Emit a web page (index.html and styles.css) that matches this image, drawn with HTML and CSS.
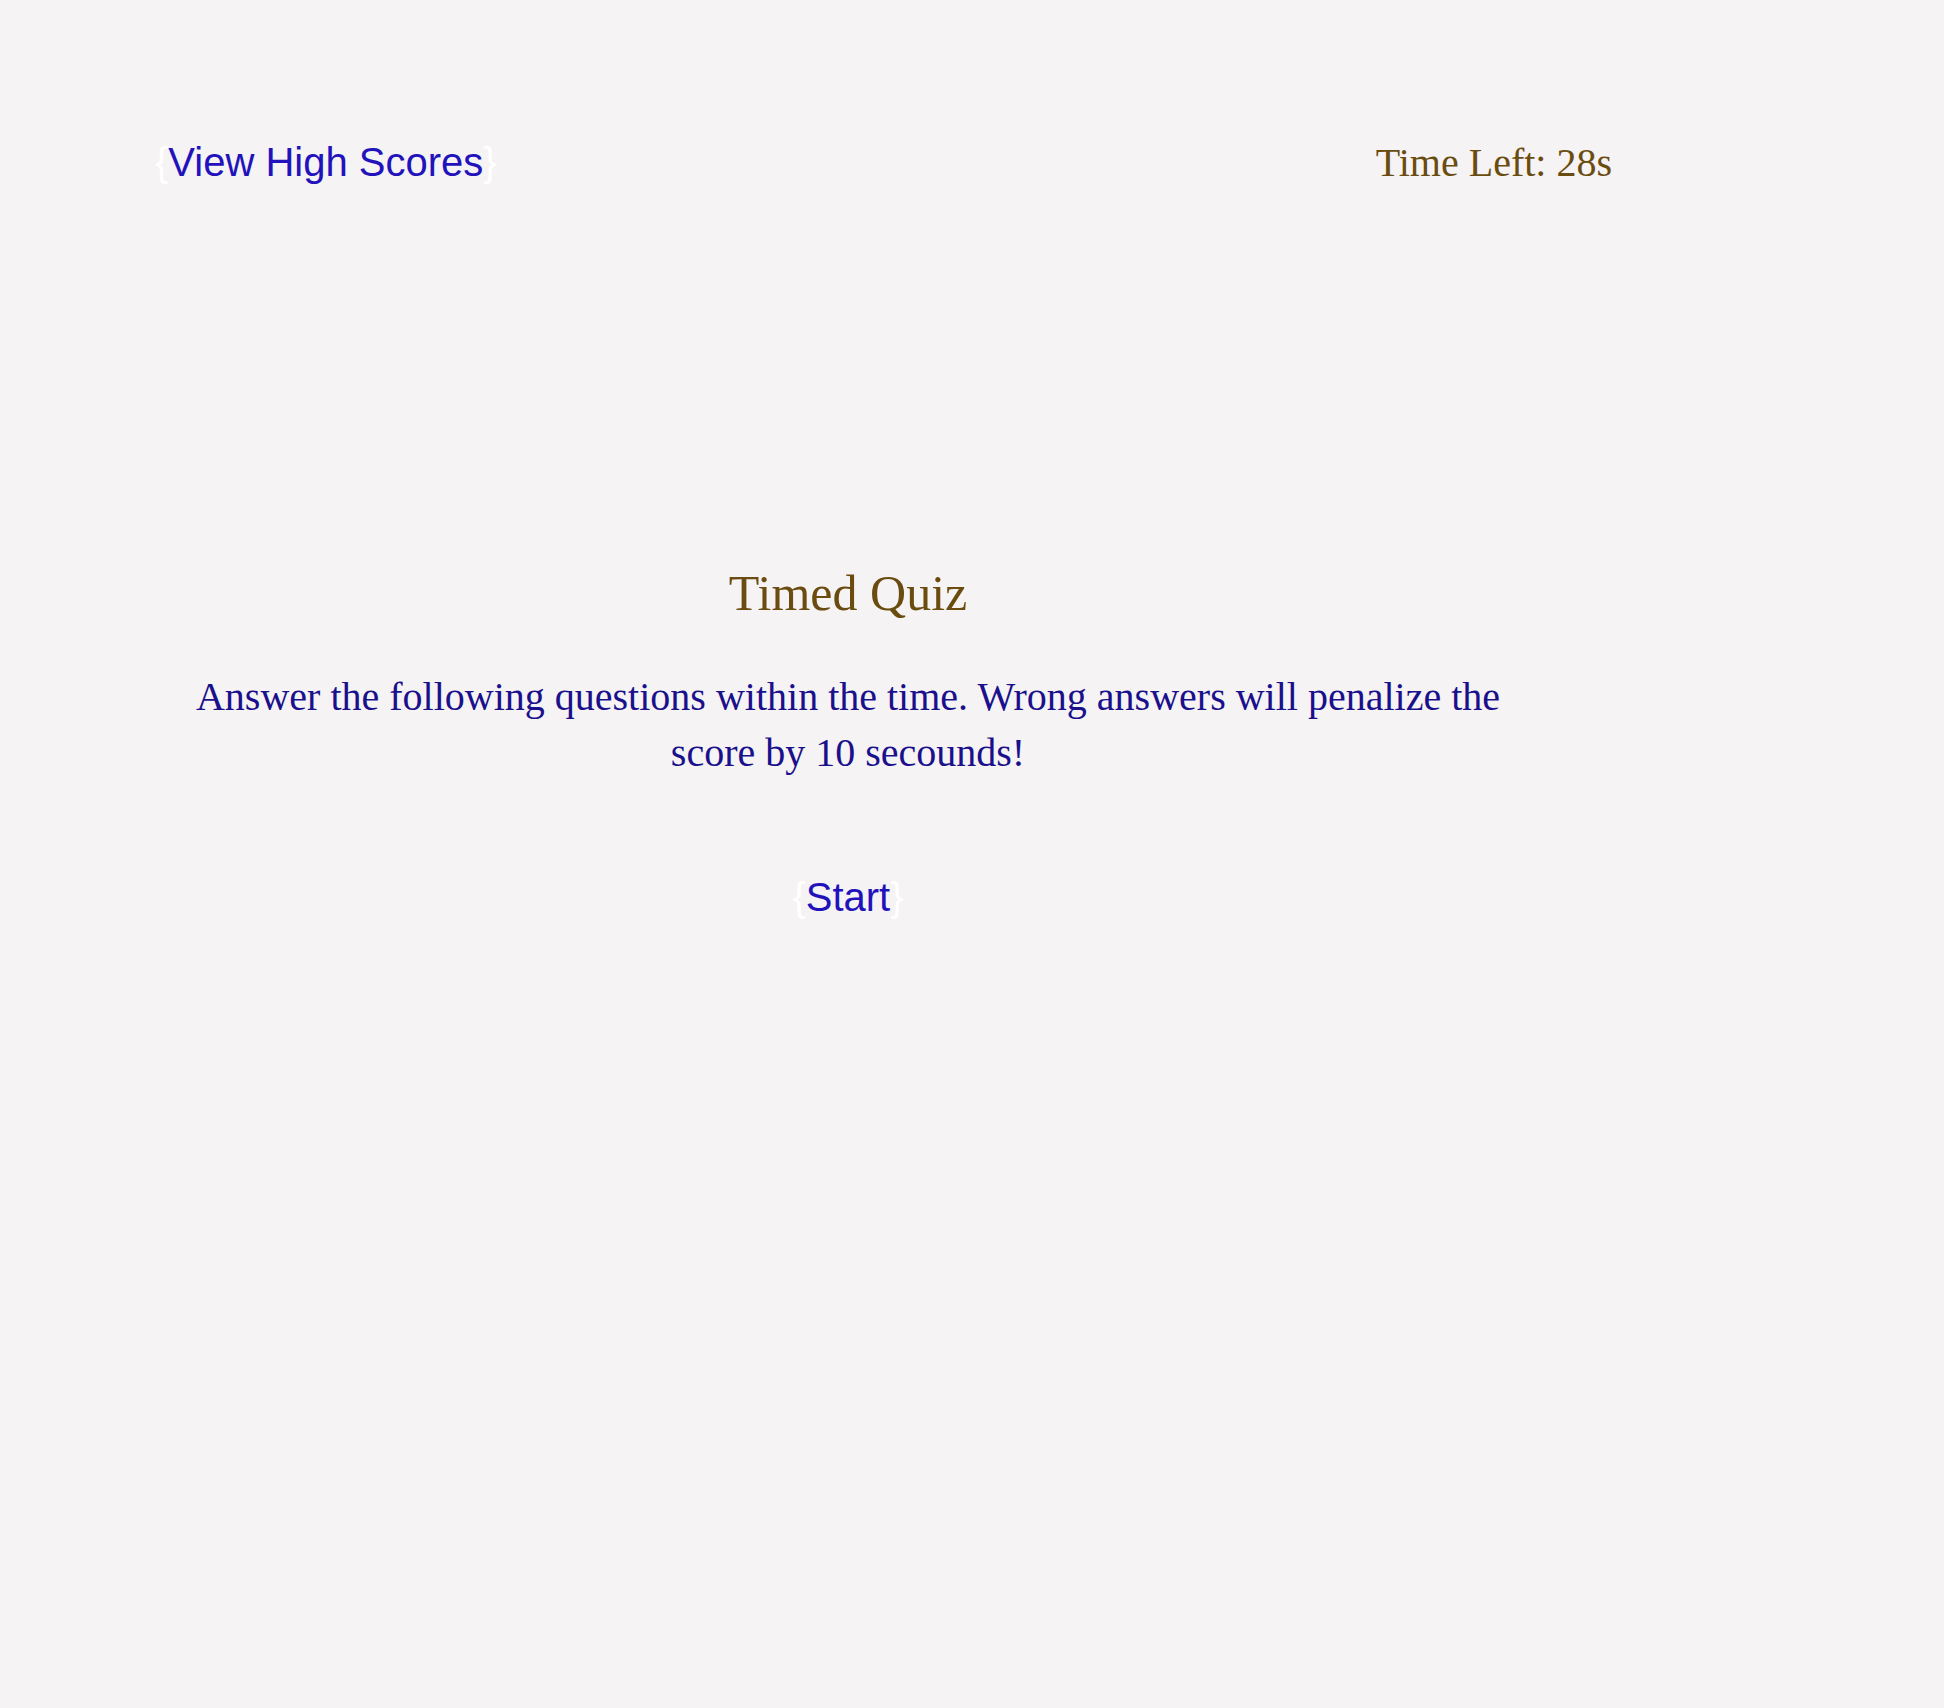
FILE: index.html
```html
<!DOCTYPE html>
<html lang="en">
<head>
<meta charset="utf-8">
<title>Timed Quiz</title>
<link rel="stylesheet" href="styles.css">
</head>
<body>
<div class="page">
  <header class="topbar">
    <button class="link-btn">View High Scores</button>
    <div class="timer">Time Left: 28s</div>
  </header>
  <main class="intro">
    <h1 class="title">Timed Quiz</h1>
    <p class="desc">Answer the following questions within the time. Wrong answers will penalize the score by 10 secounds!</p>
    <button class="link-btn start">Start</button>
  </main>
</div>
</body>
</html>
```
FILE: styles.css
```css
html, body {
  margin: 0;
  padding: 0;
  background: #f5f3f4;
}
.page {
  margin-left: 155px;
  width: 1457px;
  padding-top: 139px;
}
.topbar {
  display: flex;
  justify-content: space-between;
  align-items: baseline;
}
.link-btn {
  background: none;
  border: none;
  padding: 0;
  margin: 0;
  font-family: "Liberation Sans", Arial, sans-serif;
  font-size: 40px;
  line-height: normal;
  color: #2212bb;
  cursor: pointer;
}
.link-btn::before {
  content: "{";
  color: #ffffff;
}
.link-btn::after {
  content: "}";
  color: #ffffff;
}
.timer {
  font-family: "Liberation Serif", "Times New Roman", serif;
  font-size: 40px;
  color: #6b4c10;
}
.intro {
  width: 1386px;
  text-align: center;
  padding-top: 378px;
}
.title {
  margin: 0;
  font-family: "Liberation Serif", "Times New Roman", serif;
  font-weight: normal;
  font-size: 50px;
  color: #6b4c10;
}
.desc {
  margin: 47px 0 0;
  font-family: "Liberation Serif", "Times New Roman", serif;
  font-size: 40px;
  line-height: 56px;
  color: #1b108c;
}
.start {
  margin-top: 94px;
}
```
